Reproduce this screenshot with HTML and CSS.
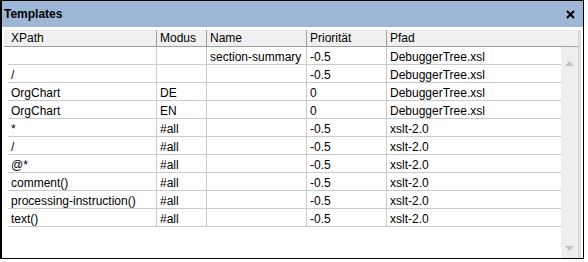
FILE: index.html
```html
<!DOCTYPE html>
<html>
<head>
<meta charset="utf-8">
<link rel="stylesheet" href="styles.css">
</head>
<body>
<div class="window">
  <div class="titlebar">
    <span class="title">Templates</span>
    <svg class="close" width="9" height="9" viewBox="0 0 9 9"><path d="M1 1 L8 8 M8 1 L1 8" stroke="#000" stroke-width="2"/></svg>
  </div>
  <div class="panel">
    <div class="header">
      <div class="hcell c1">XPath</div>
      <div class="hcell c2">Modus</div>
      <div class="hcell c3">Name</div>
      <div class="hcell c4">Priorität</div>
      <div class="hcell c5">Pfad</div>
    </div>
    <div class="body">
      <div class="rows">
        <div class="row"><div class="cell c1"></div><div class="cell c2"></div><div class="cell c3">section-summary</div><div class="cell c4">-0.5</div><div class="cell c5">DebuggerTree.xsl</div></div>
        <div class="row"><div class="cell c1">/</div><div class="cell c2"></div><div class="cell c3"></div><div class="cell c4">-0.5</div><div class="cell c5">DebuggerTree.xsl</div></div>
        <div class="row"><div class="cell c1">OrgChart</div><div class="cell c2">DE</div><div class="cell c3"></div><div class="cell c4">0</div><div class="cell c5">DebuggerTree.xsl</div></div>
        <div class="row"><div class="cell c1">OrgChart</div><div class="cell c2">EN</div><div class="cell c3"></div><div class="cell c4">0</div><div class="cell c5">DebuggerTree.xsl</div></div>
        <div class="row"><div class="cell c1">*</div><div class="cell c2">#all</div><div class="cell c3"></div><div class="cell c4">-0.5</div><div class="cell c5">xslt-2.0</div></div>
        <div class="row"><div class="cell c1">/</div><div class="cell c2">#all</div><div class="cell c3"></div><div class="cell c4">-0.5</div><div class="cell c5">xslt-2.0</div></div>
        <div class="row"><div class="cell c1">@*</div><div class="cell c2">#all</div><div class="cell c3"></div><div class="cell c4">-0.5</div><div class="cell c5">xslt-2.0</div></div>
        <div class="row"><div class="cell c1">comment()</div><div class="cell c2">#all</div><div class="cell c3"></div><div class="cell c4">-0.5</div><div class="cell c5">xslt-2.0</div></div>
        <div class="row"><div class="cell c1">processing-instruction()</div><div class="cell c2">#all</div><div class="cell c3"></div><div class="cell c4">-0.5</div><div class="cell c5">xslt-2.0</div></div>
        <div class="row"><div class="cell c1">text()</div><div class="cell c2">#all</div><div class="cell c3"></div><div class="cell c4">-0.5</div><div class="cell c5">xslt-2.0</div></div>
      </div>
      <div class="scrollbar">
        <svg width="9" height="5" viewBox="0 0 9 5"><path d="M0 5 L4.5 0 L9 5 Z" fill="#c4c4c4"/></svg>
        <svg width="9" height="5" viewBox="0 0 9 5"><path d="M0 0 L4.5 5 L9 0 Z" fill="#c4c4c4"/></svg>
      </div>
    </div>
  </div>
</div>
</body>
</html>
```

FILE: styles.css
```css
* { box-sizing: border-box; }
body {
  margin: 0;
  background: #fff;
  font-family: "Liberation Sans", Arial, sans-serif;
  font-size: 12px;
  color: #000;
}
.window {
  width: 584px;
  height: 259px;
  border: 1px solid #000;
  border-left-width: 2px;
  display: flex;
  flex-direction: column;
  background: #fff;
}
.titlebar {
  height: 26px;
  background: #9fb7d6;
  display: flex;
  align-items: center;
  justify-content: space-between;
  padding: 0 8px 0 2px;
}
.title {
  font-weight: bold;
  font-size: 12px;
}
.close { display: block; }
.panel {
  flex: 1;
  display: flex;
  flex-direction: column;
  margin: 3px 2px 0 2px;
  border-right: 3px solid #dcdcdc;
}
.header {
  height: 17px;
  background: #f0f0f0;
  border-bottom: 1px solid #a0a0a0;
  display: flex;
  padding-left: 4px;
}
.hcell {
  padding: 1px 0 0 3px;
  line-height: 15px;
  border-right: 1px solid #a0a0a0;
}
.hcell.c5 { border-right: none; }
.c1 { width: 149px; }
.c2 { width: 50px; }
.c3 { width: 100px; }
.c4 { width: 80px; }
.c5 { flex: 1; }
.body {
  flex: 1;
  display: flex;
}
.rows {
  flex: 1;
  padding-left: 4px;
}
.row {
  display: flex;
  height: 18px;
  border-bottom: 1px solid #cacaca;
}
.cell {
  padding: 2px 0 0 3px;
  line-height: 16px;
  white-space: nowrap;
  border-right: 1px solid #cacaca;
}
.cell.c5 { border-right: none; }
.scrollbar {
  width: 17px;
  background: #eeeeee;
  display: flex;
  flex-direction: column;
  justify-content: space-between;
  align-items: center;
  padding: 14px 0 7px;
}
.scrollbar svg { display: block; }
```
